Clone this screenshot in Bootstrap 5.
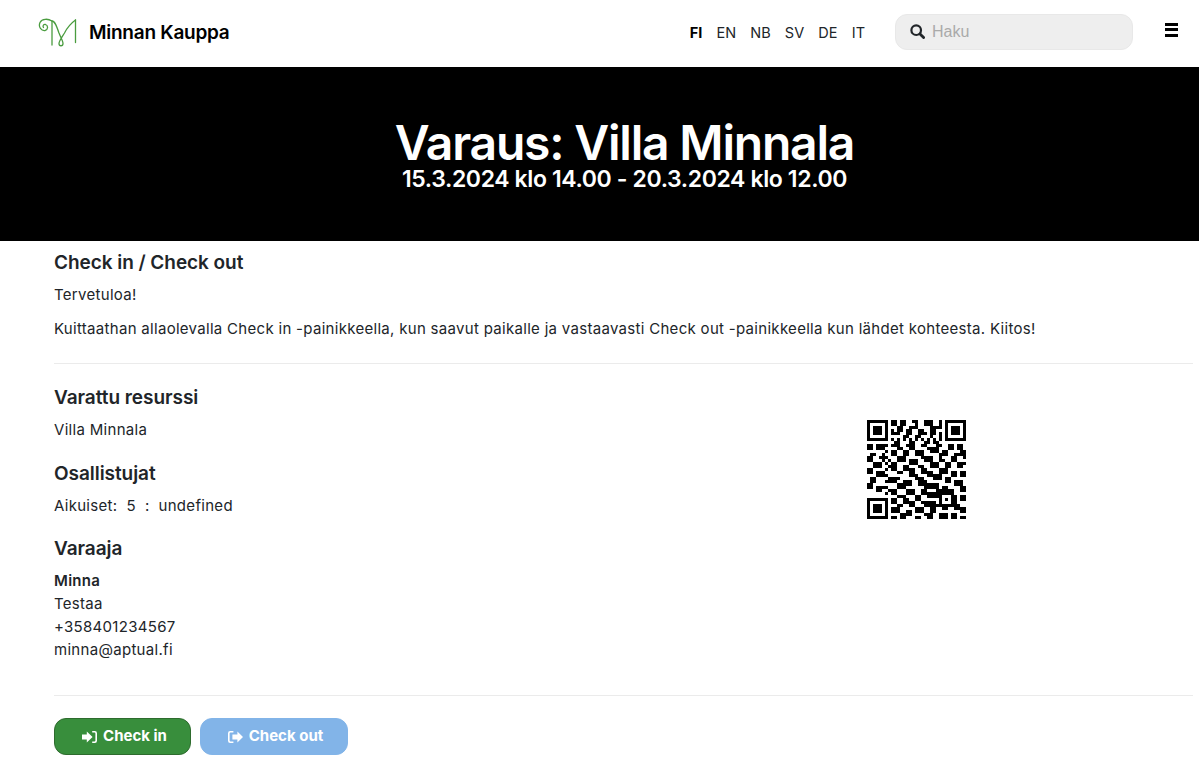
<!DOCTYPE html>
<html lang="fi">
<head>
  <meta charset="UTF-8" />
  <meta name="viewport" content="width=device-width, initial-scale=1.0"/>
  <title>Varaus: Villa Minnala</title>
  <link href="https://cdn.jsdelivr.net/npm/bootstrap@5.3.2/dist/css/bootstrap.min.css" rel="stylesheet" />
  <style>
    body { font-family: Inter, "Open Sans", sans-serif; font-size: 15px; line-height: 23px; letter-spacing: .3px; color: #212529; overflow: hidden; }
    .top-bar { height: 67px; padding: 0 21px 2px 38px; }
    .brand-logo { width: 39px; height: 29px; margin-right: 12px; }
    .brand-name { font-size: 19px; font-weight: 600; color: #000; letter-spacing: -.25px; }
    .lang-list { gap: 14.2px; margin-right: 30px; }
    .lang-link { font-size: 14.5px; color: #212529; text-decoration: none; letter-spacing: 0; }
    .lang-link.is-current { font-weight: 700; color: #000; }
    .search-box { width: 238px; height: 36px; padding-left: 14px; background: #eee; border: 1px solid #e8e8e8; border-radius: 12px; margin: 0 32px 2px 0; }
    .search-box input { border: 0; background: transparent; outline: 0; padding: 0; width: 190px; margin-left: 7px; font: 16px "Liberation Sans", Arial, sans-serif; letter-spacing: 0; }
    .search-box input::placeholder { color: #aaa; opacity: 1; }
    .menu-bars { width: 13px; height: 14px; border: 0; padding: 0; background: transparent; margin-bottom: 6px; }
    .menu-bars span { display: block; height: 3px; background: #000; margin-bottom: 2.5px; }
    .hero-band { height: 174px; padding: 2px 0 0 50px; background: #000; color: #fff; }
    .hero-band h1 { font-size: 48px; font-weight: 600; letter-spacing: -1.2px; line-height: 48px; margin: 0; }
    .hero-band h2 { font-size: 23px; font-weight: 600; letter-spacing: -.38px; line-height: 24px; margin: 0; }
    .page-body { padding: 10px 6px 0 54px; }
    .sect-title { font-size: 19px; font-weight: 600; line-height: 24px; letter-spacing: -.05px; margin-bottom: 8px; }
    .page-body p { margin-bottom: 11px; }
    .page-body p.tight { margin: 0; }
    .divider { height: 1px; background: #ebebeb; }
    .divider-a { margin: 23px 0 22px; }
    .divider-b { margin: 34px 0 22px; }
    .sect-gap { margin-top: 21px; }
    .sect-gap-b { margin-top: 20px; }
    .contact-name { font-weight: 600; }
    .qr-code { width: 99px; height: 99px; margin: 34px 0 0 54px; display: block; }
    .btn-row { gap: 9px; }
    .btn-act { display: inline-flex; align-items: center; justify-content: center; gap: 6px; height: 37px; border-radius: 12px; font-size: 15px; font-weight: 700; letter-spacing: 0; color: #fff; }
    .btn-act svg { width: 15px; height: 14px; fill: #fff; }
    .btn-in { width: 137px; padding-left: 16px; background: #388e3c; border: 1px solid #2e6b2e; }
    .btn-in:hover { background: #2e7d32; color: #fff; }
    .btn-out { width: 148px; padding-left: 15px; background: #82b4e8; border: 1px solid #82b4e8; }
    .btn-out:disabled { background: #82b4e8; border-color: #82b4e8; color: #fff; opacity: 1; }
  </style>
</head>
<body>

<div class="top-bar d-flex align-items-center">
  <svg class="brand-logo" viewBox="0 0 39 29" fill="none" stroke="#4a9c3f" stroke-width="1.3" stroke-linecap="round">
    <path d="M14 27V3C10 0.5 4 0.5 2 4.5C0 9 3.5 13 7 12.5C10 12 10.5 7.5 7.5 6.5C5.5 6 4.5 8 5.5 9.5"/>
    <path d="M14 3C17 3 19 9 21 15C22.5 19 25 23 25 25.5C25 28.5 21 28.5 21 25.5C21 23 24 19 26.5 15C29 10 32 6 37.5 2"/>
    <path d="M37.5 2V24.5"/>
  </svg>
  <span class="brand-name">Minnan Kauppa</span>
  <div class="ms-auto d-flex lang-list">
    <a class="lang-link is-current" href="#">FI</a>
    <a class="lang-link" href="#">EN</a>
    <a class="lang-link" href="#">NB</a>
    <a class="lang-link" href="#">SV</a>
    <a class="lang-link" href="#">DE</a>
    <a class="lang-link" href="#">IT</a>
  </div>
  <div class="search-box d-flex align-items-center">
    <svg width="15" height="15" viewBox="0 0 15 15" fill="none" stroke="#212529" stroke-width="2.2" stroke-linecap="round"><circle cx="6.2" cy="6.2" r="4.8"/><path d="M10 10l3.6 3.6" stroke-width="2.8"/></svg>
    <input type="text" placeholder="Haku">
  </div>
  <button class="menu-bars" type="button" aria-label="Valikko"><span></span><span></span><span></span></button>
</div>

<div class="hero-band d-flex flex-column align-items-center justify-content-center">
  <h1>Varaus: Villa Minnala</h1>
  <h2>15.3.2024 klo 14.00 - 20.3.2024 klo 12.00</h2>
</div>

<div class="page-body">
  <div class="sect-title">Check in / Check out</div>
  <p>Tervetuloa!</p>
  <p class="tight">Kuittaathan allaolevalla Check in -painikkeella, kun saavut paikalle ja vastaavasti Check out -painikkeella kun lähdet kohteesta. Kiitos!</p>

  <div class="divider divider-a"></div>

  <div class="row g-0">
    <div class="col-8">
      <div class="sect-title">Varattu resurssi</div>
      <p class="tight">Villa Minnala</p>
      <div class="sect-title sect-gap">Osallistujat</div>
      <p class="tight">Aikuiset:&nbsp; 5&nbsp; :&nbsp; undefined</p>
      <div class="sect-title sect-gap-b">Varaaja</div>
      <p class="tight contact-name">Minna</p>
      <p class="tight">Testaa</p>
      <p class="tight">+358401234567</p>
      <p class="tight">minna@aptual.fi</p>
    </div>
    <div class="col-4">
      <svg class="qr-code" id="qr" viewBox="0 0 33 33" shape-rendering="crispEdges"><path id="qr-path" fill="#000"/></svg>
    </div>
  </div>

  <div class="divider divider-b"></div>

  <div class="d-flex btn-row">
    <button class="btn btn-act btn-in" type="button">
      <svg viewBox="0 0 15 14"><path d="M0 4.6h4.8V1.6L10.6 7l-5.8 5.4v-3H0zM10.2 1h2.6A2.2 2.2 0 0 1 15 3.2v7.6a2.2 2.2 0 0 1-2.2 2.2h-2.6v-1.6h2.4c.5 0 .8-.3.8-.8V3.4c0-.5-.3-.8-.8-.8h-2.4z"/></svg>
      Check in
    </button>
    <button class="btn btn-act btn-out" type="button" disabled>
      <svg viewBox="0 0 15 14"><path d="M5.4 1H2.2A2.2 2.2 0 0 0 0 3.2v7.6A2.2 2.2 0 0 0 2.2 13h3.2v-1.6H2.4c-.5 0-.8-.3-.8-.8V3.4c0-.5.3-.8.8-.8h3zM4.4 4.6h5V1.6L15 7l-5.6 5.4v-3h-5z"/></svg>
      Check out
    </button>
  </div>
</div>

<script src="https://cdn.jsdelivr.net/npm/bootstrap@5.3.2/dist/js/bootstrap.bundle.min.js"></script>
<script>
// QR modules, read row by row from the picture; finders, timing and alignment are stamped on top
const rows = [
  '00000000 11011001100111001 00000000',
  '00000000 11011000100111001 00000000',
  '00000000 00110011100001111 00000000',
  '00000000 10110110011001100 00000000',
  '00000000 11100110011101101 00000000',
  '00000000 00001100110001001 00000000',
  '00000000 00000000000000000 00000000',
  '00000000 01100011000110110 00000000',
  '11011100 11100111001100011 00110110',
  '11011100 00110011000011110 00110110',
  '00000000 11001100111001110 11000011',
  '01100110 11001100111000001 11001111',
  '11001100 00111000001111001 00011001',
  '11000111 00111011100111001 10011000',
  '00111000 11000011100001110 01100111',
  '00111011 11001100011001110 01100110',
  '11000000 11001111001100001 11000000',
  '11011100 00110011001111001 11011011',
  '00011100 00000011100011111 00011011',
  '01100011 11100000111000111 01100000',
  '01100011 11001110011100000 01101110',
  '11000000 00111110011111110 00001110',
  '11011100 00111000000111110 11000011',
  '00011001 11000111001100011 11110011',
  '00000000 11000111001111111 00110000',
  '00000000 00111000110011111 00111011',
  '00000000 11001100110000001 10011011',
  '00000000 11001111001111101 00011000',
  '00000000 00110011000111111 11001100',
  '00000000 11100000111001100 11001111',
  '00000000 11100110111001100 00000011',
  '00000000 00011110000111001 11011000',
  '00000000 11011000110011001 11011011'
];
const grid = rows.map(r => r.replace(/ /g, '').split('').map(Number));
function stamp(x, y, size) {
  for (let j = 0; j < size; j++) {
    for (let i = 0; i < size; i++) {
      const edge = Math.max(Math.abs(i - (size - 1) / 2), Math.abs(j - (size - 1) / 2));
      grid[y + j][x + i] = size === 7 ? (edge === 2 ? 0 : 1) : (edge === 1 ? 0 : 1);
    }
  }
}
[[0, 0], [26, 0], [0, 26]].forEach(p => stamp(p[0], p[1], 7));
stamp(24, 24, 5);
for (let i = 8; i < 25; i++) { grid[6][i] = i % 2 === 0 ? 1 : 0; grid[i][6] = i % 2 === 0 ? 1 : 0; }
let d = '';
grid.forEach((row, y) => row.forEach((on, x) => { if (on) d += 'M' + x + ' ' + y + 'h1v1h-1z'; }));
document.getElementById('qr-path').setAttribute('d', d);
</script>
</body>
</html>
